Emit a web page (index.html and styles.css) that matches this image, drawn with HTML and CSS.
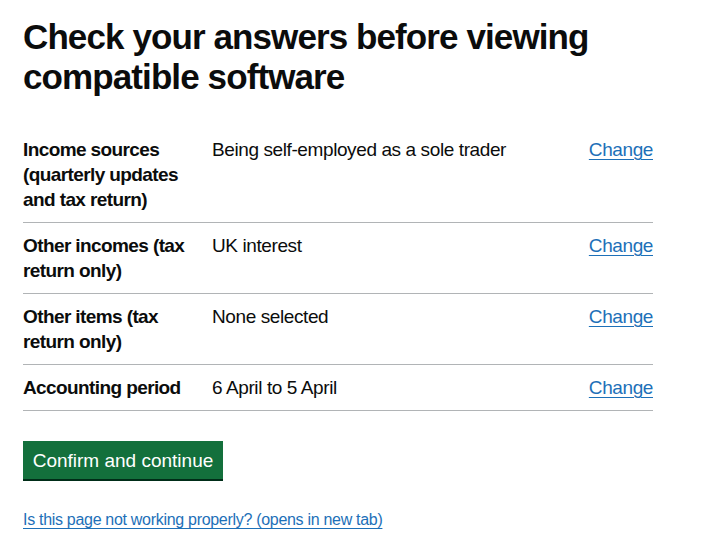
FILE: index.html
```html
<!DOCTYPE html>
<html lang="en">
<head>
<meta charset="utf-8">
<title>Check your answers before viewing compatible software</title>
<link rel="stylesheet" href="styles.css">
</head>
<body>
<main class="page">
  <h1 class="heading">Check your answers before viewing compatible software</h1>
  <dl class="summary">
    <div class="row">
      <dt class="key">Income sources (quarterly updates and tax return)</dt>
      <dd class="value">Being self-employed as a sole trader</dd>
      <dd class="action"><a class="link" href="#">Change</a></dd>
    </div>
    <div class="row">
      <dt class="key">Other incomes (tax return only)</dt>
      <dd class="value">UK interest</dd>
      <dd class="action"><a class="link" href="#">Change</a></dd>
    </div>
    <div class="row">
      <dt class="key">Other items (tax return only)</dt>
      <dd class="value">None selected</dd>
      <dd class="action"><a class="link" href="#">Change</a></dd>
    </div>
    <div class="row">
      <dt class="key">Accounting period</dt>
      <dd class="value">6 April to 5 April</dd>
      <dd class="action"><a class="link" href="#">Change</a></dd>
    </div>
  </dl>
  <button class="button" type="button">Confirm and continue</button>
  <p class="help"><a class="link" href="#">Is this page not working properly? (opens in new tab)</a></p>
</main>
</body>
</html>
```
FILE: styles.css
```css
html, body {
  margin: 0;
  padding: 0;
  background: #ffffff;
}
body {
  font-family: "Liberation Sans", Arial, sans-serif;
  color: #0b0c0c;
}
.page {
  width: 630px;
  padding: 17px 0 0 23px;
}
.heading {
  margin: 0 0 30px;
  font-size: 35px;
  line-height: 40px;
  font-weight: 700;
  letter-spacing: -0.9px;
}
.summary {
  margin: 0 0 30px;
  font-size: 19px;
  line-height: 25px;
}
.row {
  display: flex;
  border-bottom: 1px solid #b1b4b6;
}
.key, .value, .action {
  margin: 0;
  padding: 10px 20px 10px 0;
  box-sizing: border-box;
}
.key {
  width: 30%;
  font-weight: 700;
  letter-spacing: -0.6px;
}
.value {
  width: 50%;
  letter-spacing: -0.4px;
}
.action {
  width: 20%;
  padding-right: 0;
  text-align: right;
  letter-spacing: -0.4px;
}
.link {
  color: #1d70b8;
  text-decoration: underline;
  text-decoration-thickness: 1px;
  text-underline-offset: 0.16em;
}
.button {
  display: block;
  margin: 0 0 31px;
  padding: 8px 0 7px;
  width: 200px;
  border: 2px solid transparent;
  border-radius: 0;
  background: #13703c;
  color: #ffffff;
  font-family: "Liberation Sans", Arial, sans-serif;
  font-size: 19px;
  line-height: 19px;
  text-align: center;
  white-space: nowrap;
  box-shadow: 0 2px 0 #002d18;
  cursor: pointer;
}
.help {
  margin: 0;
  font-size: 16px;
  line-height: 20px;
  letter-spacing: -0.3px;
}
```
